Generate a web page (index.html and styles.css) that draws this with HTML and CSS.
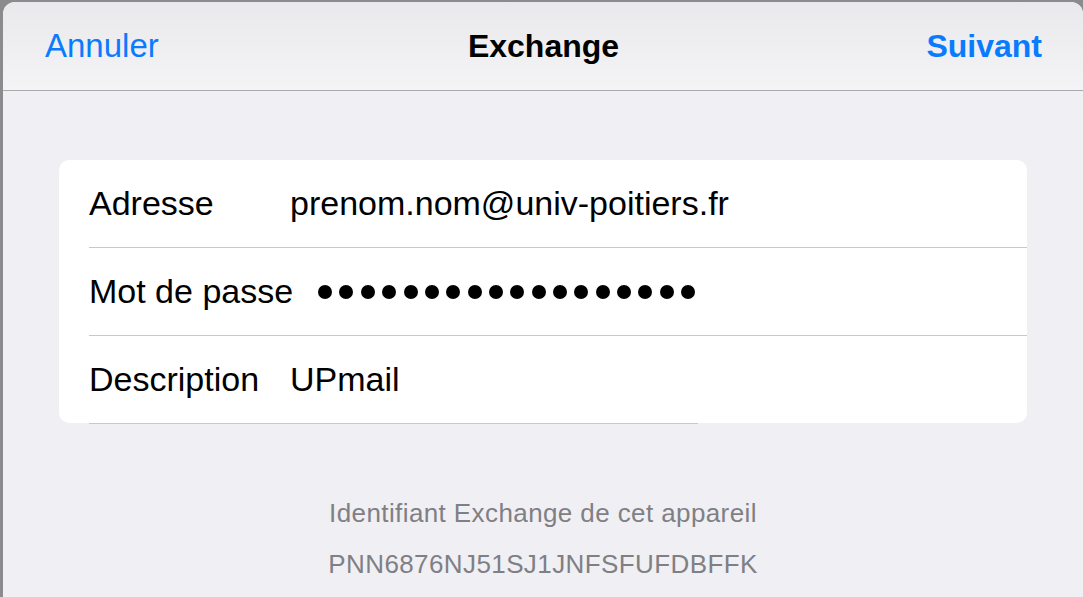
FILE: index.html
```html
<!DOCTYPE html>
<html lang="fr">
<head>
<meta charset="utf-8">
<title>Exchange</title>
<link rel="stylesheet" href="styles.css">
</head>
<body>
<div class="modal">
  <header class="navbar">
    <span class="nav-btn nav-left">Annuler</span>
    <span class="nav-title">Exchange</span>
    <span class="nav-btn nav-right">Suivant</span>
  </header>
  <main class="content">
    <section class="card">
      <div class="row">
        <span class="label">Adresse</span>
        <span class="value">prenom.nom@univ-poitiers.fr</span>
      </div>
      <div class="row">
        <span class="label">Mot de passe</span>
        <span class="dots">
          <i class="dot"></i><i class="dot"></i><i class="dot"></i><i class="dot"></i><i class="dot"></i><i class="dot"></i><i class="dot"></i><i class="dot"></i><i class="dot"></i><i class="dot"></i><i class="dot"></i><i class="dot"></i><i class="dot"></i><i class="dot"></i><i class="dot"></i><i class="dot"></i><i class="dot"></i><i class="dot"></i>
        </span>
      </div>
      <div class="row row-last">
        <span class="label">Description</span>
        <span class="value">UPmail</span>
      </div>
    </section>
    <div class="stray-line"></div>
    <footer class="device-info">
      <p class="info-line">Identifiant Exchange de cet appareil</p>
      <p class="info-line">PNN6876NJ51SJ1JNFSFUFDBFFK</p>
    </footer>
  </main>
</div>
</body>
</html>
```

FILE: styles.css
```css
html, body {
  margin: 0;
  padding: 0;
  height: 100%;
  overflow: hidden;
}

body {
  background: #8b8b8e;
  font-family: "Liberation Sans", Arial, sans-serif;
}

.modal {
  margin: 2px 0 0 3px;
  height: 595px;
  background: #efeff4;
  border-radius: 12px 12px 0 0;
  overflow: hidden;
}

.navbar {
  height: 88px;
  border-bottom: 1px solid #a9a9ad;
  background: linear-gradient(#e9e9ed, #f4f4f6);
  display: grid;
  grid-template-columns: 1fr auto 1fr;
  align-items: center;
  padding: 0 41px 0 42px;
}

.nav-btn {
  color: #0b7bfd;
}

.nav-left {
  font-size: 33px;
  justify-self: start;
}

.nav-right {
  font-size: 32px;
  font-weight: bold;
  justify-self: end;
}

.nav-title {
  font-size: 32px;
  font-weight: bold;
  color: #000;
}

.content {
  padding-top: 69px;
}

.card {
  margin: 0 56px;
  background: #fff;
  border-radius: 10px;
  overflow: hidden;
}

.row {
  height: 87px;
  margin-left: 30px;
  border-bottom: 1px solid #c8c7cc;
  display: flex;
  align-items: center;
  font-size: 34px;
  color: #000;
}

.row-last {
  border-bottom: none;
}

.label {
  flex: 0 0 auto;
  min-width: 201px;
}

.dots {
  display: flex;
  gap: 7.35px;
  margin-left: 25px;
}

.dot {
  display: block;
  width: 14px;
  height: 14px;
  border-radius: 50%;
  background: #000;
}

.stray-line {
  margin-left: 86px;
  width: 609px;
  height: 1px;
  background: #c8c7cc;
}

.device-info {
  margin-top: 64px;
  text-align: center;
  color: #7f7f84;
  font-size: 26px;
  letter-spacing: 0.4px;
  line-height: 51px;
}

.info-line {
  margin: 0;
}
```
